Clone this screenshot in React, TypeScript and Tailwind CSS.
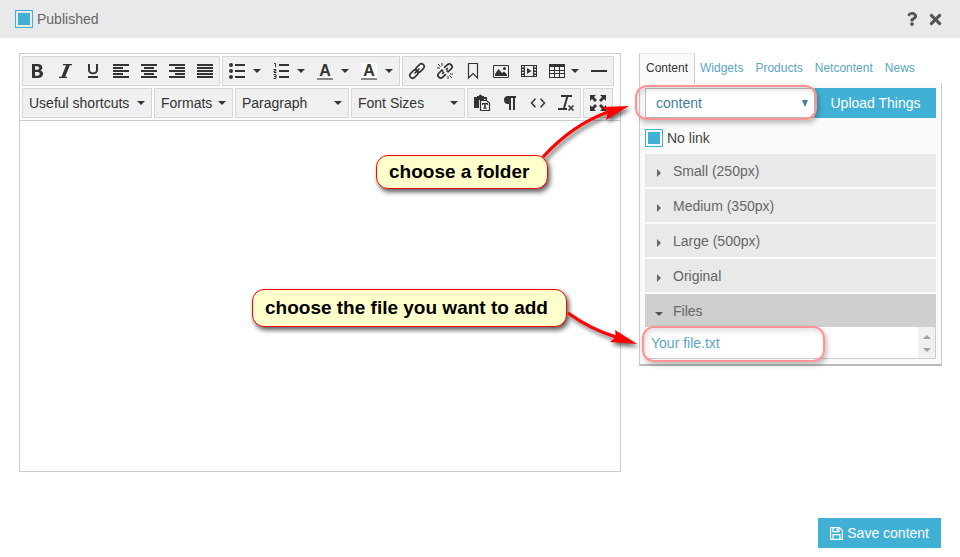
import React from 'react';
import { FaQuestion, FaTimes } from 'react-icons/fa';

// Toolbar drawings, all on a 16x16 grid
const ICONS: Record<string, React.ReactNode> = {
    bold: <path fillRule="evenodd" d="M3 1h5.800c2.900 0 4.500 1.300 4.500 3.600 0 1.400-.7 2.400-1.900 2.900 1.700.4 2.600 1.600 2.600 3.300 0 2.700-1.900 4.200-4.900 4.200H3zM6 3.200v3.500h2.200c1.300 0 2-.6 2-1.700s-.7-1.800-2-1.800zM6 8.900v3.900h2.500c1.400 0 2.200-.7 2.200-2s-.8-1.900-2.200-1.900z" />,
    italic: <path d="M6 1h9v1.200h-2.200L8.200 13.800H10V15H2v-1.200h2.500L9.100 2.200H6z" />,
    underline: <path d="M3 1h2v5.800C5 8.600 6 9.500 8 9.500s3-.9 3-2.700V1h2v6c0 2.600-2 4.300-5 4.300S3 9.600 3 7zM3 13h10v2H3z" />,
    left: <path d="M0 1h16v2H0zM0 4h10v2H0zM0 7h16v2H0zM0 10h10v2H0zM0 13h16v2H0z" />,
    center: <path d="M0 1h16v2H0zM3 4h10v2H3zM0 7h16v2H0zM3 10h10v2H3zM0 13h16v2H0z" />,
    right: <path d="M0 1h16v2H0zM6 4h10v2H6zM0 7h16v2H0zM6 10h10v2H6zM0 13h16v2H0z" />,
    justify: <path d="M0 1h16v2H0zM0 4h16v2H0zM0 7h16v2H0zM0 10h16v2H0zM0 13h16v2H0z" />,
    bullets: (
        <>
            <circle cx="2" cy="2" r="2" />
            <circle cx="2" cy="8" r="2" />
            <circle cx="2" cy="14" r="2" />
            <path d="M6 1h10v2H6zM6 7h10v2H6zM6 13h10v2H6z" />
        </>
    ),
    numbers: (
        <>
            <path d="M6 1h10v2H6zM6 7h10v2H6zM6 13h10v2H6z" />
            <path d="M1 .5h1.500V4M.5 6.500h2.500V8H1v1.500h2.500M.5 11.500h2.500v4H.5M1 13.500h2" fill="none" stroke="currentColor" />
        </>
    ),
    link: (
        <g fill="none" stroke="currentColor" strokeWidth="1.500" transform="rotate(-45 8 8)">
            <rect x="-1" y="5.200" width="9.500" height="5.600" rx="2.800" />
            <rect x="7.500" y="5.200" width="9.500" height="5.600" rx="2.800" />
            <path d="M4.500 8h7" />
        </g>
    ),
    unlink: (
        <>
            <g fill="none" stroke="currentColor" strokeWidth="1.700" transform="rotate(-45 8 8)">
                <path d="M6.500 10.800H2a2.800 2.800 0 0 1 0-5.600h4.500V7M9.500 9v1.800H14a2.800 2.800 0 0 0 0-5.600H9.500M4 8h2.500M9.500 8H12" />
            </g>
            <path d="M5 0v3M0 5h3M1 1l2.500 2.500M11 16v-3M16 11h-3M15 15l-2.500-2.500" fill="none" stroke="currentColor" />
        </>
    ),
    bookmark: <path d="M3.500.5h9V15L8 10.500 3.500 15z" fill="none" stroke="currentColor" strokeWidth="1.200" />,
    image: (
        <>
            <path d="M.5 2.500h15v12H.5z" fill="none" stroke="currentColor" />
            <path d="M2 13v-2l3.500-5L9 10l2-1.500 3 3V13z" />
            <circle cx="11.500" cy="5.500" r="1.500" />
        </>
    ),
    media: (
        <>
            <path fillRule="evenodd" d="M0 2h16v12H0zM4 3v10h8V3zM1 3v1.500h1.800V3zM1 6v1.500h1.800V6zM1 9v1.500h1.800V9zM1 12v1h1.800v-1zM13.200 3v1.500H15V3zM13.200 6v1.500H15V6zM13.200 9v1.500H15V9zM13.200 12v1H15v-1z" />
            <path d="M6 5v6l4.500-3z" />
        </>
    ),
    table: <path fillRule="evenodd" d="M0 1h16v14H0zM1 4v3h4V4zM6 4v3h4V4zM11 4v3h4V4zM1 8v2h4V8zM6 8v2h4V8zM11 8v2h4V8zM1 11v3h4v-3zM6 11v3h4v-3zM11 11v3h4v-3z" />,
    rule: <path d="M0 7h16v2H0z" />,
    paste: (
        <>
            <path d="M0 2h3V1h2a1.500 1.500 0 0 1 3 0h2v1h3v3h-1.500V4H10v1H5v8H0z" />
            <path d="M6.500 5.500h6L15.500 8v7.500h-9z" fill="#f0f0f0" stroke="currentColor" strokeWidth="1.200" />
            <path d="M8 8h6v2h-1V9.300h-1.200v3.400h.9v1H9.300v-1h.9V9.300H9V10H8z" />
        </>
    ),
    pilcrow: <path d="M6 1h8v2h-1v12h-2V3H9v12H7V9H6a4 4 0 0 1 0-8z" />,
    code: <path d="M5.500 3.800 1.500 8l4 4.200M10.500 3.800l4 4.200-4 4.200" fill="none" stroke="currentColor" strokeWidth="1.500" />,
    clear: (
        <>
            <path d="M3 1h11M9.500 1 6 13M0 14h9" fill="none" stroke="currentColor" strokeWidth="2" />
            <path d="m10.500 10.500 5 5M15.500 10.500l-5 5" fill="none" stroke="currentColor" strokeWidth="1.500" />
        </>
    ),
    fullscreen: (
        <path d="M0 0h6L4 2l3 3-2 2-3-3-2 2zM16 0v6l-2-2-3 3-2-2 3-3-2-2zM0 16v-6l2 2 3-3 2 2-3 3 2 2zM16 16h-6l2-2-3-3 2-2 3 3 2-2z" />
    ),
};

const Icon: React.FC<{ name: string }> = ({ name }) => (
    <svg width="16" height="16" viewBox="0 0 16 16" fill="currentColor" className="shrink-0 overflow-visible">
        {ICONS[name]}
    </svg>
);

const Caret: React.FC = () => (
    <svg width="8" height="4" viewBox="0 0 8 4" fill="currentColor" className="shrink-0">
        <path d="M0 0h8L4 4z" />
    </svg>
);

const Group: React.FC<{ children: React.ReactNode }> = ({ children }) => (
    <div className="flex h-[30px] border border-[#d6d6d6] bg-[#f0f0f0]">{children}</div>
);

const Tool: React.FC<{ name: string; menu?: boolean }> = ({ name, menu }) => (
    <button type="button" aria-label={name} className={menu ? 'flex items-center gap-2 px-1.5' : 'flex w-7 items-center justify-center'}>
        <Icon name={name} />
        {menu && <Caret />}
    </button>
);

const ColorTool: React.FC<{ label: string; filled?: boolean }> = ({ label, filled }) => (
    <button type="button" aria-label={label} className="flex w-11 items-center gap-2 pl-1.5">
        <span className={`w-4 border-b-2 border-[#888] text-center text-base leading-[15px] font-bold ${filled ? 'bg-white' : ''}`}>A</span>
        <Caret />
    </button>
);

const Dropdown: React.FC<{ label: string; width: string }> = ({ label, width }) => (
    <Group>
        <button type="button" className={`flex items-center justify-between px-1.5 whitespace-nowrap ${width}`}>
            {label}
            <Caret />
        </button>
    </Group>
);

const Tick: React.FC<{ id: string; label: string }> = ({ id, label }) => (
    <div className="flex items-center gap-1">
        <input
            id={id}
            type="checkbox"
            defaultChecked
            className="size-[18px] appearance-none border border-[#41b0d5] bg-white bg-clip-content p-0.5 checked:bg-[#41b0d5]"
        />
        <label htmlFor={id}>{label}</label>
    </div>
);

const TABS = ['Widgets', 'Products', 'Netcontent', 'News'];
const SIZES = ['Small (250px)', 'Medium (350px)', 'Large (500px)', 'Original'];

const CALLOUT = 'absolute rounded-xl border border-[#f00] bg-[#ffffcc] pr-[18px] pl-3 text-[19px] font-bold whitespace-nowrap text-black shadow-[2px_3px_5px_rgba(0,0,0,0.65)]';
const HIGHLIGHT = 'pointer-events-none absolute rounded-xl border-2 border-[#ff9292] shadow-[2px_3px_5px_rgba(0,0,0,0.25),inset_2px_3px_5px_rgba(0,0,0,0.12)]';

const Editor: React.FC = () => (
    <section className="min-w-0 flex-1 border border-[#ccc] text-[#333]">
        <div className="flex flex-col gap-0.5 border-b border-[#ccc] p-0.5">
            <div className="flex gap-0.5">
                <Group>
                    <Tool name="bold" />
                    <Tool name="italic" />
                    <Tool name="underline" />
                    <Tool name="left" />
                    <Tool name="center" />
                    <Tool name="right" />
                    <Tool name="justify" />
                </Group>
                <Group>
                    <Tool name="bullets" menu />
                    <Tool name="numbers" menu />
                    <ColorTool label="Text color" />
                    <ColorTool label="Background color" filled />
                </Group>
                <Group>
                    <Tool name="link" />
                    <Tool name="unlink" />
                    <Tool name="bookmark" />
                    <Tool name="image" />
                    <Tool name="media" />
                    <button type="button" aria-label="table" className="flex items-center gap-1.5 px-1.5">
                        <Icon name="table" />
                        <Caret />
                    </button>
                    <Tool name="rule" />
                </Group>
            </div>
            <div className="flex gap-0.5">
                <Dropdown label="Useful shortcuts" width="w-32" />
                <Dropdown label="Formats" width="w-[77px]" />
                <Dropdown label="Paragraph" width="w-28" />
                <Dropdown label="Font Sizes" width="w-28" />
                <Group>
                    <Tool name="paste" />
                    <Tool name="pilcrow" />
                    <Tool name="code" />
                    <Tool name="clear" />
                </Group>
                <Group>
                    <Tool name="fullscreen" />
                </Group>
            </div>
        </div>
        <textarea aria-label="Page content" className="block h-[350px] w-full resize-none p-2 outline-none" />
    </section>
);

const Annotations: React.FC = () => (
    <>
        <div className={`${HIGHLIGHT} top-8 -left-1 h-[35px] w-[182px]`} />
        <div className={`${HIGHLIGHT} top-[273px] left-[3px] h-9 w-[183px]`} />
        <div className={`${CALLOUT} top-[102px] -left-[263px] py-1 leading-6`}>choose a folder</div>
        <div className={`${CALLOUT} top-[236px] -left-[387px] py-1.5 leading-6`}>choose the file you want to add</div>
        <svg
            width="110"
            height="270"
            viewBox="539 95 110 270"
            className="pointer-events-none absolute top-[42px] -left-[100px] drop-shadow-[2px_3px_2px_rgba(0,0,0,0.6)]"
        >
            <path d="M543 157Q572 125 608 112M568 313Q590 329 616 337" fill="none" stroke="#f00" strokeWidth="3" />
            <path d="M629 106 602 107 608 112 606 120zM637 344 615 330 616 337 610 342z" fill="#f00" />
        </svg>
    </>
);

const FilePanel: React.FC = () => (
    <aside className="relative w-[303px] shrink-0">
        <nav className="flex h-[30px] items-stretch gap-3 text-xs leading-[30px] text-[#5ba5c3]">
            <a href="#content" className="relative z-10 -mr-[7px] h-[31px] border-x border-t border-[#ccc] border-t-[#e5e5e5] bg-[#fafafa] px-1.5 leading-[29px] text-[#333]">Content</a>
            {TABS.map((tab) => (
                <a key={tab} href={`#${tab.toLowerCase()}`}>{tab}</a>
            ))}
        </nav>
        <div className="border-x border-b-2 border-[#ccc] border-b-[#bbb] bg-[#fafafa] p-[5px]">
            <div className="flex h-[30px]">
                <div className="relative w-[170px]">
                    <select aria-label="Folder" className="h-full w-full appearance-none border border-[#bbb] bg-white px-2.5 text-[#3d7f9a]">
                        <option>content</option>
                    </select>
                    <svg width="6" height="7" viewBox="0 0 6 7" className="pointer-events-none absolute top-3 right-[7px]">
                        <path d="M0 0h6L3 7z" fill="#3d7f9a" />
                    </svg>
                </div>
                <button type="button" className="flex-1 bg-[#41b0d5] text-white">Upload Things</button>
            </div>
            <div className="pt-2.5 pb-1.5 text-[#444]">
                <Tick id="no-link" label="No link" />
            </div>
            <div className="flex flex-col gap-0.5">
                {SIZES.map((size) => (
                    <button key={size} type="button" className="flex h-[33px] items-center bg-[#e9e9e9] pl-3">
                        <svg width="4" height="8" viewBox="0 0 4 8" className="mt-1 mr-3">
                            <path d="M0 0v8l4-4z" fill="#666" />
                        </svg>
                        {size}
                    </button>
                ))}
                <button type="button" className="flex h-[33px] items-center bg-[#cfcfcf] pl-2.5">
                    <svg width="8" height="4" viewBox="0 0 8 4" className="mt-1.5 mr-2.5">
                        <path d="M0 0h8L4 4z" fill="#555" />
                    </svg>
                    Files
                </button>
            </div>
            <div className="flex h-8 justify-between border-r border-b border-[#ccc] bg-white">
                <a href="#file" className="pl-1.5 leading-8 text-[#5ba5c3]">Your file.txt</a>
                <div className="flex w-[17px] flex-col items-center justify-between bg-[#f0f0f0] pt-2 pb-1.5">
                    <svg width="8" height="4" viewBox="0 0 8 4"><path d="M0 4h8L4 0z" fill="#a0a0a0" /></svg>
                    <svg width="8" height="4" viewBox="0 0 8 4"><path d="M0 0h8L4 4z" fill="#a0a0a0" /></svg>
                </div>
            </div>
        </div>
        <Annotations />
    </aside>
);

const App: React.FC = () => (
    <div className="min-h-screen bg-white font-['Liberation_Sans',Arial,sans-serif] text-sm text-[#666]">
        <header className="flex h-[38px] items-center justify-between bg-[#e9e9e9] pr-4 pl-[15px]">
            <Tick id="published" label="Published" />
            <div className="flex items-center gap-2 text-[#555]">
                <button type="button" aria-label="Help"><FaQuestion size={14} /></button>
                <button type="button" aria-label="Close"><FaTimes size={17} /></button>
            </div>
        </header>
        <main className="flex items-start gap-[18px] pt-[15px] pr-[18px] pl-[19px]">
            <Editor />
            <FilePanel />
        </main>
        <footer className="flex justify-end pt-[46px] pr-[19px]">
            <button type="button" className="flex h-[30px] items-center gap-1 bg-[#41b0d5] px-3 text-white">
                <svg width="13" height="13" viewBox="0 0 13 13" fill="none" stroke="currentColor" strokeWidth="1.200">
                    <path d="M1 .6h8.500L12.400 3.500v8.900H.6V.6zM3 .6v4h6v-4M3 12.400V7.600h7v4.800" />
                    <path d="M6.500 1.500h1.500v2H6.500z" fill="currentColor" stroke="none" />
                </svg>
                Save content
            </button>
        </footer>
    </div>
);

export default App;
